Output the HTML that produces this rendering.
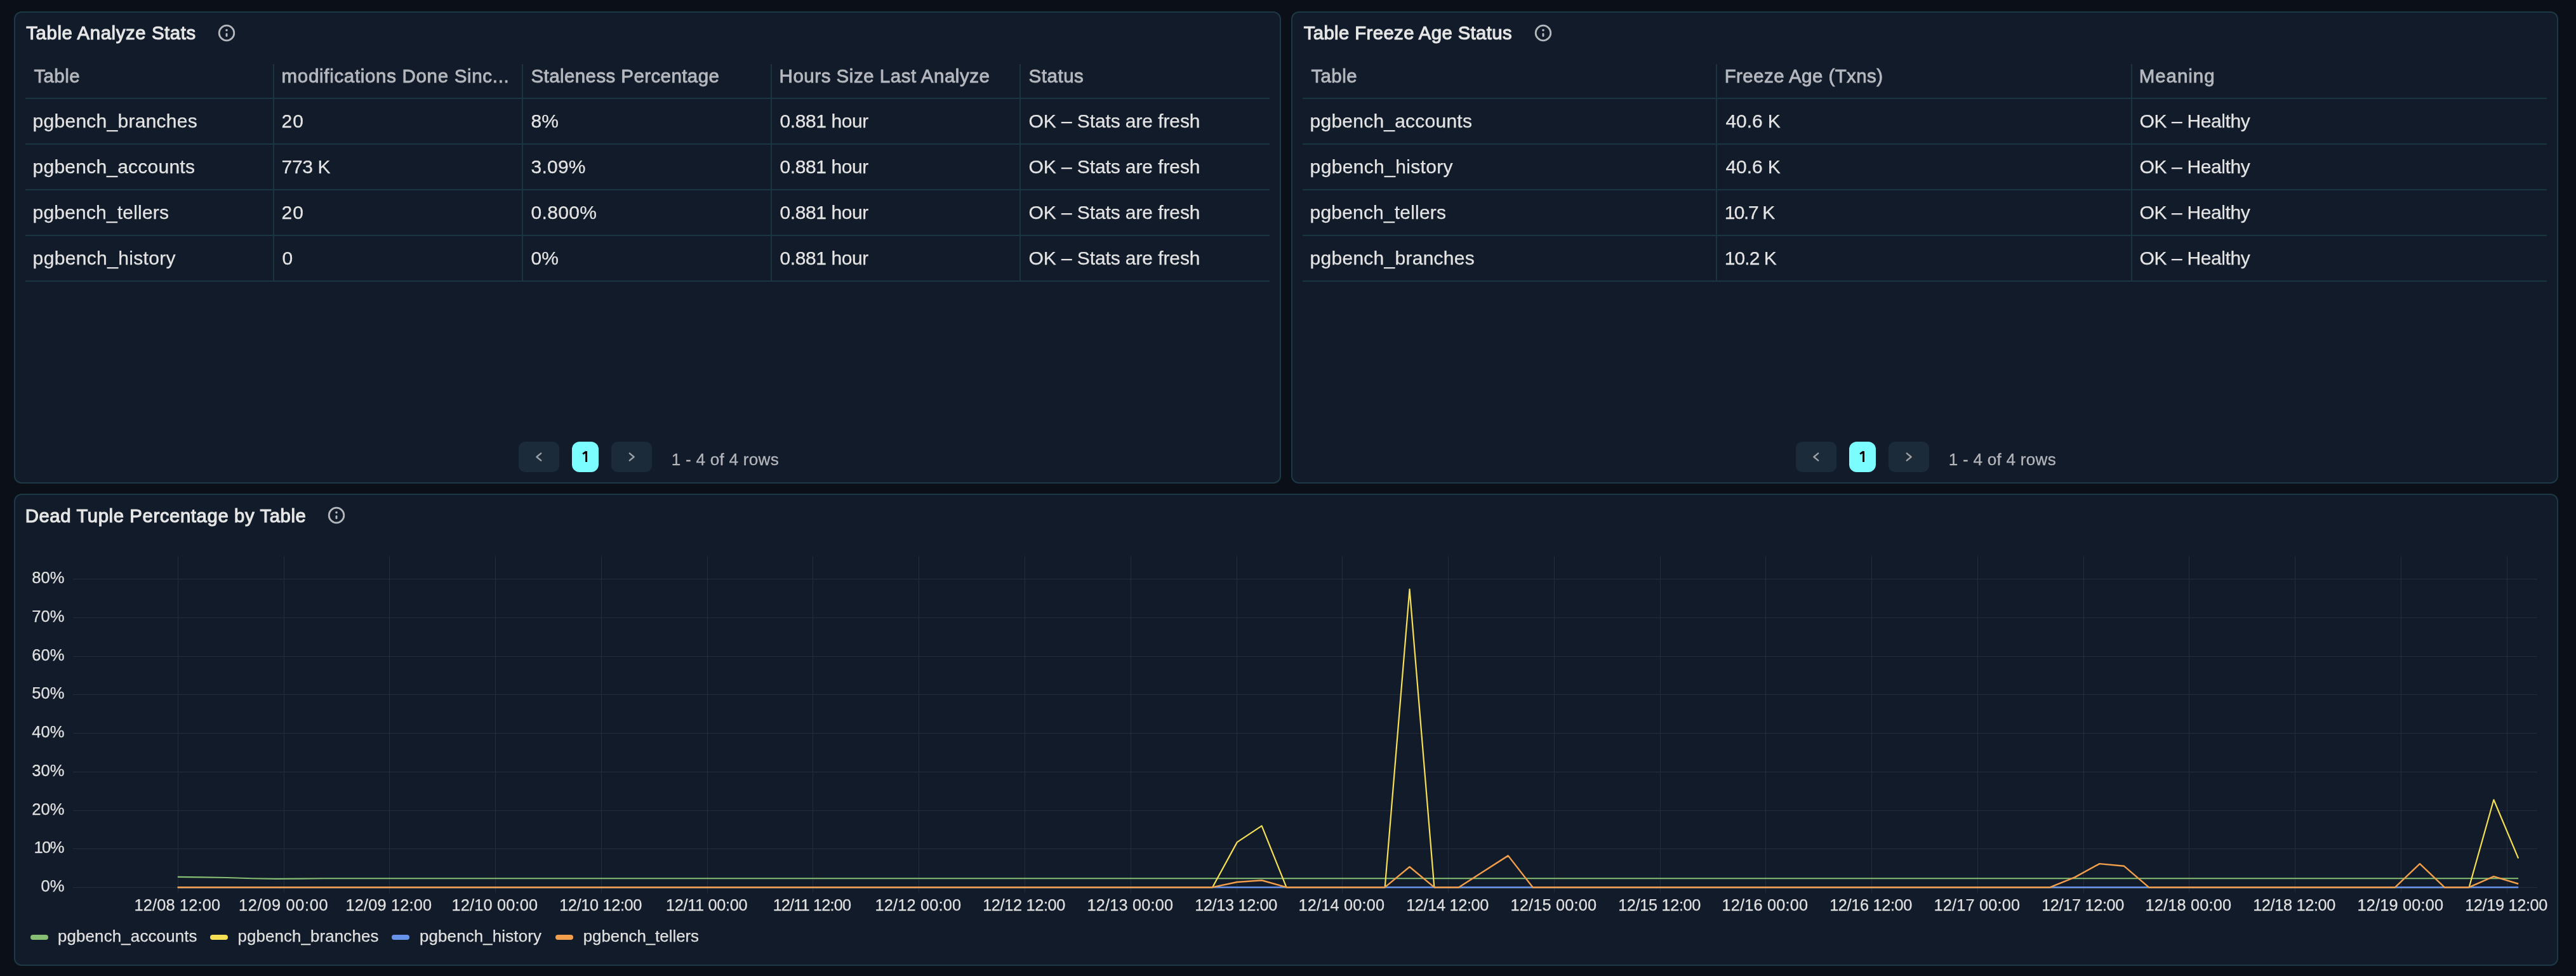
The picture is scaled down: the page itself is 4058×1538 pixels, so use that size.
<!DOCTYPE html>
<html><head><meta charset="utf-8"><style>
html,body{margin:0;padding:0;}
body{width:4058px;height:1538px;background:#0b0f17;position:relative;overflow:hidden;font-family:"Liberation Sans", sans-serif;}
.t{position:absolute;white-space:nowrap;font-family:"Liberation Sans", sans-serif;}
.r{position:absolute;}
#c{position:absolute;left:0;top:0;width:4058px;height:1538px;will-change:transform;}
</style></head><body><div id="c">
<div class="r" style="left:22px;top:18px;width:1992px;height:740px;background:#121b29;border:2px solid #1e3946;border-radius:12px"></div>
<div id="t0" class="t" style="left:41.32px;top:37.20px;font-size:29.3px;line-height:29.3px;color:#e6e6e6;letter-spacing:0.620px;-webkit-text-stroke:1.1px #e6e6e6;">Table Analyze Stats</div>
<svg class="r" style="left:343px;top:38px" width="28" height="28" viewBox="0 0 28 28"><circle cx="14" cy="14" r="11.8" fill="none" stroke="#b4b7bc" stroke-width="2.8"/><circle cx="14" cy="9.6" r="1.8" fill="#b4b7bc"/><line x1="14" y1="15.4" x2="14" y2="18.4" stroke="#b4b7bc" stroke-width="3" stroke-linecap="round"/></svg>
<div class="r" style="left:40px;top:154px;width:1960px;height:2px;background:#1b3442;"></div>
<div class="r" style="left:40px;top:226px;width:1960px;height:2px;background:#1b3442;"></div>
<div class="r" style="left:40px;top:298px;width:1960px;height:2px;background:#1b3442;"></div>
<div class="r" style="left:40px;top:370px;width:1960px;height:2px;background:#1b3442;"></div>
<div class="r" style="left:40px;top:442px;width:1960px;height:2px;background:#1b3442;"></div>
<div class="r" style="left:430.00px;top:101px;width:2px;height:343px;background:#1b3442"></div>
<div class="r" style="left:822.00px;top:101px;width:2px;height:343px;background:#1b3442"></div>
<div class="r" style="left:1214.00px;top:101px;width:2px;height:343px;background:#1b3442"></div>
<div class="r" style="left:1606.00px;top:101px;width:2px;height:343px;background:#1b3442"></div>
<div id="t1" class="t" style="left:53.40px;top:105.13px;font-size:29.5px;line-height:29.5px;color:#b5b8be;letter-spacing:0.405px;-webkit-text-stroke:0.85px #b5b8be;">Table</div>
<div id="t2" class="t" style="left:443.60px;top:105.13px;font-size:29.5px;line-height:29.5px;color:#b5b8be;letter-spacing:0.684px;-webkit-text-stroke:0.85px #b5b8be;">modifications Done Sinc...</div>
<div id="t3" class="t" style="left:836.50px;top:105.13px;font-size:29.5px;line-height:29.5px;color:#b5b8be;letter-spacing:0.407px;-webkit-text-stroke:0.85px #b5b8be;">Staleness Percentage</div>
<div id="t4" class="t" style="left:1227.60px;top:105.13px;font-size:29.5px;line-height:29.5px;color:#b5b8be;letter-spacing:0.524px;-webkit-text-stroke:0.85px #b5b8be;">Hours Size Last Analyze</div>
<div id="t5" class="t" style="left:1620.50px;top:105.13px;font-size:29.5px;line-height:29.5px;color:#b5b8be;letter-spacing:0.540px;-webkit-text-stroke:0.85px #b5b8be;">Status</div>
<div id="t6" class="t" style="left:51.60px;top:175.50px;font-size:30px;line-height:30px;color:#e4e4e4;letter-spacing:0.264px;-webkit-text-stroke:0.25px #e4e4e4;">pgbench_branches</div>
<div id="t7" class="t" style="left:443.60px;top:175.50px;font-size:30px;line-height:30px;color:#e4e4e4;letter-spacing:1.000px;-webkit-text-stroke:0.25px #e4e4e4;">20</div>
<div id="t8" class="t" style="left:836.50px;top:175.50px;font-size:30px;line-height:30px;color:#e4e4e4;-webkit-text-stroke:0.25px #e4e4e4;">8%</div>
<div id="t9" class="t" style="left:1228.50px;top:175.50px;font-size:30px;line-height:30px;color:#e4e4e4;letter-spacing:-0.400px;-webkit-text-stroke:0.25px #e4e4e4;">0.881 hour</div>
<div id="t10" class="t" style="left:1620.50px;top:175.50px;font-size:30px;line-height:30px;color:#e4e4e4;letter-spacing:-0.095px;-webkit-text-stroke:0.25px #e4e4e4;">OK – Stats are fresh</div>
<div id="t11" class="t" style="left:51.60px;top:247.50px;font-size:30px;line-height:30px;color:#e4e4e4;letter-spacing:0.228px;-webkit-text-stroke:0.25px #e4e4e4;">pgbench_accounts</div>
<div id="t12" class="t" style="left:443.60px;top:247.50px;font-size:30px;line-height:30px;color:#e4e4e4;letter-spacing:-0.360px;-webkit-text-stroke:0.25px #e4e4e4;">773 K</div>
<div id="t13" class="t" style="left:836.50px;top:247.50px;font-size:30px;line-height:30px;color:#e4e4e4;letter-spacing:0.225px;-webkit-text-stroke:0.25px #e4e4e4;">3.09%</div>
<div id="t14" class="t" style="left:1228.50px;top:247.50px;font-size:30px;line-height:30px;color:#e4e4e4;letter-spacing:-0.400px;-webkit-text-stroke:0.25px #e4e4e4;">0.881 hour</div>
<div id="t15" class="t" style="left:1620.50px;top:247.50px;font-size:30px;line-height:30px;color:#e4e4e4;letter-spacing:-0.095px;-webkit-text-stroke:0.25px #e4e4e4;">OK – Stats are fresh</div>
<div id="t16" class="t" style="left:51.60px;top:319.50px;font-size:30px;line-height:30px;color:#e4e4e4;letter-spacing:0.180px;-webkit-text-stroke:0.25px #e4e4e4;">pgbench_tellers</div>
<div id="t17" class="t" style="left:443.60px;top:319.50px;font-size:30px;line-height:30px;color:#e4e4e4;letter-spacing:1.000px;-webkit-text-stroke:0.25px #e4e4e4;">20</div>
<div id="t18" class="t" style="left:836.50px;top:319.50px;font-size:30px;line-height:30px;color:#e4e4e4;letter-spacing:0.360px;-webkit-text-stroke:0.25px #e4e4e4;">0.800%</div>
<div id="t19" class="t" style="left:1228.50px;top:319.50px;font-size:30px;line-height:30px;color:#e4e4e4;letter-spacing:-0.400px;-webkit-text-stroke:0.25px #e4e4e4;">0.881 hour</div>
<div id="t20" class="t" style="left:1620.50px;top:319.50px;font-size:30px;line-height:30px;color:#e4e4e4;letter-spacing:-0.095px;-webkit-text-stroke:0.25px #e4e4e4;">OK – Stats are fresh</div>
<div id="t21" class="t" style="left:51.60px;top:391.50px;font-size:30px;line-height:30px;color:#e4e4e4;letter-spacing:0.347px;-webkit-text-stroke:0.25px #e4e4e4;">pgbench_history</div>
<div id="t22" class="t" style="left:444.50px;top:391.50px;font-size:30px;line-height:30px;color:#e4e4e4;-webkit-text-stroke:0.25px #e4e4e4;">0</div>
<div id="t23" class="t" style="left:836.50px;top:391.50px;font-size:30px;line-height:30px;color:#e4e4e4;-webkit-text-stroke:0.25px #e4e4e4;">0%</div>
<div id="t24" class="t" style="left:1228.50px;top:391.50px;font-size:30px;line-height:30px;color:#e4e4e4;letter-spacing:-0.400px;-webkit-text-stroke:0.25px #e4e4e4;">0.881 hour</div>
<div id="t25" class="t" style="left:1620.50px;top:391.50px;font-size:30px;line-height:30px;color:#e4e4e4;letter-spacing:-0.095px;-webkit-text-stroke:0.25px #e4e4e4;">OK – Stats are fresh</div>
<div class="r" style="left:817px;top:696px;width:64px;height:48px;background:#1b2b3a;border-radius:10px"></div>
<div class="r" style="left:901px;top:696px;width:42px;height:48px;background:#7bfcff;border-radius:12px"></div>
<div class="r" style="left:963px;top:696px;width:64px;height:48px;background:#1b2b3a;border-radius:10px"></div>
<svg class="r" style="left:817px;top:696px" width="64" height="48" viewBox="0 0 64 48"><polyline points="35.2,18.3 28.4,24 35.2,29.7" fill="none" stroke="#9da0a5" stroke-width="2.4" stroke-linecap="round" stroke-linejoin="round"/></svg>
<svg class="r" style="left:963px;top:696px" width="64" height="48" viewBox="0 0 64 48"><polyline points="28.8,18.3 35.6,24 28.8,29.7" fill="none" stroke="#9da0a5" stroke-width="2.4" stroke-linecap="round" stroke-linejoin="round"/></svg>
<svg class="r" style="left:901px;top:696px" width="42" height="48" viewBox="0 0 42 48"><path d="M22.6,15 L22.6,32.1 M22.6,15.6 L17.2,19.4" fill="none" stroke="#000" stroke-width="2.9" stroke-linecap="butt" stroke-linejoin="miter"/></svg>
<div id="t26" class="t" style="left:1057.78px;top:710.91px;font-size:26.1px;line-height:26.1px;color:#b4b6bb;letter-spacing:0.257px;-webkit-text-stroke:0.3px #b4b6bb;">1 - 4 of 4 rows</div>
<div class="r" style="left:2034px;top:18px;width:1992px;height:740px;background:#121b29;border:2px solid #1e3946;border-radius:12px"></div>
<div id="t27" class="t" style="left:2053.68px;top:37.20px;font-size:29.3px;line-height:29.3px;color:#e6e6e6;letter-spacing:0.401px;-webkit-text-stroke:1.1px #e6e6e6;">Table Freeze Age Status</div>
<svg class="r" style="left:2416.6px;top:38px" width="28" height="28" viewBox="0 0 28 28"><circle cx="14" cy="14" r="11.8" fill="none" stroke="#b4b7bc" stroke-width="2.8"/><circle cx="14" cy="9.6" r="1.8" fill="#b4b7bc"/><line x1="14" y1="15.4" x2="14" y2="18.4" stroke="#b4b7bc" stroke-width="3" stroke-linecap="round"/></svg>
<div class="r" style="left:2052px;top:154px;width:1960px;height:2px;background:#1b3442;"></div>
<div class="r" style="left:2052px;top:226px;width:1960px;height:2px;background:#1b3442;"></div>
<div class="r" style="left:2052px;top:298px;width:1960px;height:2px;background:#1b3442;"></div>
<div class="r" style="left:2052px;top:370px;width:1960px;height:2px;background:#1b3442;"></div>
<div class="r" style="left:2052px;top:442px;width:1960px;height:2px;background:#1b3442;"></div>
<div class="r" style="left:2703.33px;top:101px;width:2px;height:343px;background:#1b3442"></div>
<div class="r" style="left:3356.67px;top:101px;width:2px;height:343px;background:#1b3442"></div>
<div id="t28" class="t" style="left:2065.40px;top:105.13px;font-size:29.5px;line-height:29.5px;color:#b5b8be;letter-spacing:0.405px;-webkit-text-stroke:0.85px #b5b8be;">Table</div>
<div id="t29" class="t" style="left:2716.63px;top:105.13px;font-size:29.5px;line-height:29.5px;color:#b5b8be;letter-spacing:0.427px;-webkit-text-stroke:0.85px #b5b8be;">Freeze Age (Txns)</div>
<div id="t30" class="t" style="left:3369.67px;top:105.13px;font-size:29.5px;line-height:29.5px;color:#b5b8be;letter-spacing:0.960px;-webkit-text-stroke:0.85px #b5b8be;">Meaning</div>
<div id="t31" class="t" style="left:2063.60px;top:175.50px;font-size:30px;line-height:30px;color:#e4e4e4;letter-spacing:0.228px;-webkit-text-stroke:0.25px #e4e4e4;">pgbench_accounts</div>
<div id="t32" class="t" style="left:2718.43px;top:175.50px;font-size:30px;line-height:30px;color:#e4e4e4;letter-spacing:-0.072px;-webkit-text-stroke:0.25px #e4e4e4;">40.6 K</div>
<div id="t33" class="t" style="left:3370.57px;top:175.50px;font-size:30px;line-height:30px;color:#e4e4e4;letter-spacing:-0.376px;-webkit-text-stroke:0.25px #e4e4e4;">OK – Healthy</div>
<div id="t34" class="t" style="left:2063.60px;top:247.50px;font-size:30px;line-height:30px;color:#e4e4e4;letter-spacing:0.347px;-webkit-text-stroke:0.25px #e4e4e4;">pgbench_history</div>
<div id="t35" class="t" style="left:2718.43px;top:247.50px;font-size:30px;line-height:30px;color:#e4e4e4;letter-spacing:-0.072px;-webkit-text-stroke:0.25px #e4e4e4;">40.6 K</div>
<div id="t36" class="t" style="left:3370.57px;top:247.50px;font-size:30px;line-height:30px;color:#e4e4e4;letter-spacing:-0.376px;-webkit-text-stroke:0.25px #e4e4e4;">OK – Healthy</div>
<div id="t37" class="t" style="left:2063.60px;top:319.50px;font-size:30px;line-height:30px;color:#e4e4e4;letter-spacing:0.180px;-webkit-text-stroke:0.25px #e4e4e4;">pgbench_tellers</div>
<div id="t38" class="t" style="left:2716.63px;top:319.50px;font-size:30px;line-height:30px;color:#e4e4e4;letter-spacing:-1.440px;-webkit-text-stroke:0.25px #e4e4e4;">10.7 K</div>
<div id="t39" class="t" style="left:3370.57px;top:319.50px;font-size:30px;line-height:30px;color:#e4e4e4;letter-spacing:-0.376px;-webkit-text-stroke:0.25px #e4e4e4;">OK – Healthy</div>
<div id="t40" class="t" style="left:2063.60px;top:391.50px;font-size:30px;line-height:30px;color:#e4e4e4;letter-spacing:0.264px;-webkit-text-stroke:0.25px #e4e4e4;">pgbench_branches</div>
<div id="t41" class="t" style="left:2716.63px;top:391.50px;font-size:30px;line-height:30px;color:#e4e4e4;letter-spacing:-0.900px;-webkit-text-stroke:0.25px #e4e4e4;">10.2 K</div>
<div id="t42" class="t" style="left:3370.57px;top:391.50px;font-size:30px;line-height:30px;color:#e4e4e4;letter-spacing:-0.376px;-webkit-text-stroke:0.25px #e4e4e4;">OK – Healthy</div>
<div class="r" style="left:2829px;top:696px;width:64px;height:48px;background:#1b2b3a;border-radius:10px"></div>
<div class="r" style="left:2913px;top:696px;width:42px;height:48px;background:#7bfcff;border-radius:12px"></div>
<div class="r" style="left:2975px;top:696px;width:64px;height:48px;background:#1b2b3a;border-radius:10px"></div>
<svg class="r" style="left:2829px;top:696px" width="64" height="48" viewBox="0 0 64 48"><polyline points="35.2,18.3 28.4,24 35.2,29.7" fill="none" stroke="#9da0a5" stroke-width="2.4" stroke-linecap="round" stroke-linejoin="round"/></svg>
<svg class="r" style="left:2975px;top:696px" width="64" height="48" viewBox="0 0 64 48"><polyline points="28.8,18.3 35.6,24 28.8,29.7" fill="none" stroke="#9da0a5" stroke-width="2.4" stroke-linecap="round" stroke-linejoin="round"/></svg>
<svg class="r" style="left:2913px;top:696px" width="42" height="48" viewBox="0 0 42 48"><path d="M22.6,15 L22.6,32.1 M22.6,15.6 L17.2,19.4" fill="none" stroke="#000" stroke-width="2.9" stroke-linecap="butt" stroke-linejoin="miter"/></svg>
<div id="t43" class="t" style="left:3069.78px;top:710.91px;font-size:26.1px;line-height:26.1px;color:#b4b6bb;letter-spacing:0.257px;-webkit-text-stroke:0.3px #b4b6bb;">1 - 4 of 4 rows</div>
<div class="r" style="left:22px;top:778px;width:4004px;height:740px;background:#121b29;border:2px solid #1e3946;border-radius:12px"></div>
<div id="t44" class="t" style="left:39.70px;top:797.50px;font-size:29.3px;line-height:29.3px;color:#e6e6e6;letter-spacing:0.608px;-webkit-text-stroke:1.1px #e6e6e6;">Dead Tuple Percentage by Table</div>
<svg class="r" style="left:516px;top:798px" width="28" height="28" viewBox="0 0 28 28"><circle cx="14" cy="14" r="11.8" fill="none" stroke="#b4b7bc" stroke-width="2.8"/><circle cx="14" cy="9.6" r="1.8" fill="#b4b7bc"/><line x1="14" y1="15.4" x2="14" y2="18.4" stroke="#b4b7bc" stroke-width="3" stroke-linecap="round"/></svg>
<svg class="r" style="left:0;top:0" width="4058" height="1538" viewBox="0 0 4058 1538"><rect x="115" y="1398" width="3882" height="1" fill="#252d39"/><rect x="115" y="1337" width="3882" height="1" fill="#252d39"/><rect x="115" y="1277" width="3882" height="1" fill="#252d39"/><rect x="115" y="1216" width="3882" height="1" fill="#252d39"/><rect x="115" y="1155" width="3882" height="1" fill="#252d39"/><rect x="115" y="1094" width="3882" height="1" fill="#252d39"/><rect x="115" y="1034" width="3882" height="1" fill="#252d39"/><rect x="115" y="973" width="3882" height="1" fill="#252d39"/><rect x="115" y="912" width="3882" height="1" fill="#252d39"/><rect x="280" y="877" width="1" height="530" fill="#252d39"/><rect x="447" y="877" width="1" height="530" fill="#252d39"/><rect x="613" y="877" width="1" height="530" fill="#252d39"/><rect x="780" y="877" width="1" height="530" fill="#252d39"/><rect x="947" y="877" width="1" height="530" fill="#252d39"/><rect x="1114" y="877" width="1" height="530" fill="#252d39"/><rect x="1280" y="877" width="1" height="530" fill="#252d39"/><rect x="1447" y="877" width="1" height="530" fill="#252d39"/><rect x="1614" y="877" width="1" height="530" fill="#252d39"/><rect x="1781" y="877" width="1" height="530" fill="#252d39"/><rect x="1948" y="877" width="1" height="530" fill="#252d39"/><rect x="2114" y="877" width="1" height="530" fill="#252d39"/><rect x="2281" y="877" width="1" height="530" fill="#252d39"/><rect x="2448" y="877" width="1" height="530" fill="#252d39"/><rect x="2615" y="877" width="1" height="530" fill="#252d39"/><rect x="2781" y="877" width="1" height="530" fill="#252d39"/><rect x="2948" y="877" width="1" height="530" fill="#252d39"/><rect x="3115" y="877" width="1" height="530" fill="#252d39"/><rect x="3282" y="877" width="1" height="530" fill="#252d39"/><rect x="3448" y="877" width="1" height="530" fill="#252d39"/><rect x="3615" y="877" width="1" height="530" fill="#252d39"/><rect x="3782" y="877" width="1" height="530" fill="#252d39"/><rect x="3949" y="877" width="1" height="530" fill="#252d39"/><polyline points="279.80,1381.80 318.61,1382.40 357.43,1383.01 396.24,1384.23 435.06,1384.84 473.87,1384.53 512.69,1384.23 551.50,1384.23 590.32,1384.23 629.13,1384.23 667.95,1384.23 706.76,1384.23 745.58,1384.23 784.39,1384.23 823.21,1384.23 862.02,1384.23 900.84,1384.23 939.65,1384.23 978.47,1384.23 1017.28,1384.23 1056.09,1384.23 1094.91,1384.23 1133.72,1384.23 1172.54,1384.23 1211.35,1384.23 1250.17,1384.23 1288.98,1384.23 1327.80,1384.23 1366.61,1384.23 1405.43,1384.23 1444.24,1384.23 1483.06,1384.23 1521.87,1384.23 1560.69,1384.23 1599.50,1384.23 1638.32,1384.23 1677.13,1384.23 1715.95,1384.23 1754.76,1384.23 1793.57,1384.23 1832.39,1384.23 1871.20,1384.23 1910.02,1384.23 1948.83,1384.23 1987.65,1384.23 2026.46,1384.23 2065.28,1384.23 2104.09,1384.23 2142.91,1384.23 2181.72,1384.23 2220.54,1384.23 2259.35,1384.23 2298.17,1384.23 2336.98,1384.23 2375.80,1384.23 2414.61,1384.23 2453.43,1384.23 2492.24,1384.23 2531.05,1384.23 2569.87,1384.23 2608.68,1384.23 2647.50,1384.23 2686.31,1384.23 2725.13,1384.23 2763.94,1384.23 2802.76,1384.23 2841.57,1384.23 2880.39,1384.23 2919.20,1384.23 2958.02,1384.23 2996.83,1384.23 3035.65,1384.23 3074.46,1384.23 3113.28,1384.23 3152.09,1384.23 3190.91,1384.23 3229.72,1384.23 3268.53,1384.23 3307.35,1384.23 3346.16,1384.23 3384.98,1384.23 3423.79,1384.23 3462.61,1384.23 3501.42,1384.23 3540.24,1384.23 3579.05,1384.23 3617.87,1384.23 3656.68,1384.23 3695.50,1384.23 3734.31,1384.23 3773.13,1384.23 3811.94,1384.23 3850.76,1384.23 3889.57,1384.23 3928.39,1384.23 3967.20,1384.23" fill="none" stroke="#86bf73" stroke-width="2.2" stroke-linejoin="round"/><polyline points="279.80,1398.20 318.61,1398.20 357.43,1398.20 396.24,1398.20 435.06,1398.20 473.87,1398.20 512.69,1398.20 551.50,1398.20 590.32,1398.20 629.13,1398.20 667.95,1398.20 706.76,1398.20 745.58,1398.20 784.39,1398.20 823.21,1398.20 862.02,1398.20 900.84,1398.20 939.65,1398.20 978.47,1398.20 1017.28,1398.20 1056.09,1398.20 1094.91,1398.20 1133.72,1398.20 1172.54,1398.20 1211.35,1398.20 1250.17,1398.20 1288.98,1398.20 1327.80,1398.20 1366.61,1398.20 1405.43,1398.20 1444.24,1398.20 1483.06,1398.20 1521.87,1398.20 1560.69,1398.20 1599.50,1398.20 1638.32,1398.20 1677.13,1398.20 1715.95,1398.20 1754.76,1398.20 1793.57,1398.20 1832.39,1398.20 1871.20,1398.20 1910.02,1398.20 1948.83,1327.12 1987.65,1301.30 2026.46,1398.20 2065.28,1398.20 2104.09,1398.20 2142.91,1398.20 2181.72,1398.20 2220.54,928.60 2259.35,1398.20 2298.17,1398.20 2336.98,1398.20 2375.80,1398.20 2414.61,1398.20 2453.43,1398.20 2492.24,1398.20 2531.05,1398.20 2569.87,1398.20 2608.68,1398.20 2647.50,1398.20 2686.31,1398.20 2725.13,1398.20 2763.94,1398.20 2802.76,1398.20 2841.57,1398.20 2880.39,1398.20 2919.20,1398.20 2958.02,1398.20 2996.83,1398.20 3035.65,1398.20 3074.46,1398.20 3113.28,1398.20 3152.09,1398.20 3190.91,1398.20 3229.72,1398.20 3268.53,1398.20 3307.35,1398.20 3346.16,1398.20 3384.98,1398.20 3423.79,1398.20 3462.61,1398.20 3501.42,1398.20 3540.24,1398.20 3579.05,1398.20 3617.87,1398.20 3656.68,1398.20 3695.50,1398.20 3734.31,1398.20 3773.13,1398.20 3811.94,1398.20 3850.76,1398.20 3889.57,1398.20 3928.39,1260.30 3967.20,1352.64" fill="none" stroke="#f5df55" stroke-width="2.2" stroke-linejoin="round"/><polyline points="279.80,1398.20 318.61,1398.20 357.43,1398.20 396.24,1398.20 435.06,1398.20 473.87,1398.20 512.69,1398.20 551.50,1398.20 590.32,1398.20 629.13,1398.20 667.95,1398.20 706.76,1398.20 745.58,1398.20 784.39,1398.20 823.21,1398.20 862.02,1398.20 900.84,1398.20 939.65,1398.20 978.47,1398.20 1017.28,1398.20 1056.09,1398.20 1094.91,1398.20 1133.72,1398.20 1172.54,1398.20 1211.35,1398.20 1250.17,1398.20 1288.98,1398.20 1327.80,1398.20 1366.61,1398.20 1405.43,1398.20 1444.24,1398.20 1483.06,1398.20 1521.87,1398.20 1560.69,1398.20 1599.50,1398.20 1638.32,1398.20 1677.13,1398.20 1715.95,1398.20 1754.76,1398.20 1793.57,1398.20 1832.39,1398.20 1871.20,1398.20 1910.02,1398.20 1948.83,1398.20 1987.65,1398.20 2026.46,1398.20 2065.28,1398.20 2104.09,1398.20 2142.91,1398.20 2181.72,1398.20 2220.54,1398.20 2259.35,1398.20 2298.17,1398.20 2336.98,1398.20 2375.80,1398.20 2414.61,1398.20 2453.43,1398.20 2492.24,1398.20 2531.05,1398.20 2569.87,1398.20 2608.68,1398.20 2647.50,1398.20 2686.31,1398.20 2725.13,1398.20 2763.94,1398.20 2802.76,1398.20 2841.57,1398.20 2880.39,1398.20 2919.20,1398.20 2958.02,1398.20 2996.83,1398.20 3035.65,1398.20 3074.46,1398.20 3113.28,1398.20 3152.09,1398.20 3190.91,1398.20 3229.72,1398.20 3268.53,1398.20 3307.35,1398.20 3346.16,1398.20 3384.98,1398.20 3423.79,1398.20 3462.61,1398.20 3501.42,1398.20 3540.24,1398.20 3579.05,1398.20 3617.87,1398.20 3656.68,1398.20 3695.50,1398.20 3734.31,1398.20 3773.13,1398.20 3811.94,1398.20 3850.76,1398.20 3889.57,1398.20 3928.39,1398.20 3967.20,1398.20" fill="none" stroke="#6794ea" stroke-width="2.4" stroke-linejoin="round"/><polyline points="279.80,1398.20 318.61,1398.20 357.43,1398.20 396.24,1398.20 435.06,1398.20 473.87,1398.20 512.69,1398.20 551.50,1398.20 590.32,1398.20 629.13,1398.20 667.95,1398.20 706.76,1398.20 745.58,1398.20 784.39,1398.20 823.21,1398.20 862.02,1398.20 900.84,1398.20 939.65,1398.20 978.47,1398.20 1017.28,1398.20 1056.09,1398.20 1094.91,1398.20 1133.72,1398.20 1172.54,1398.20 1211.35,1398.20 1250.17,1398.20 1288.98,1398.20 1327.80,1398.20 1366.61,1398.20 1405.43,1398.20 1444.24,1398.20 1483.06,1398.20 1521.87,1398.20 1560.69,1398.20 1599.50,1398.20 1638.32,1398.20 1677.13,1398.20 1715.95,1398.20 1754.76,1398.20 1793.57,1398.20 1832.39,1398.20 1871.20,1398.20 1910.02,1398.20 1948.83,1390.00 1987.65,1387.27 2026.46,1398.20 2065.28,1398.20 2104.09,1398.20 2142.91,1398.20 2181.72,1398.20 2220.54,1366.00 2259.35,1398.20 2298.17,1398.20 2336.98,1373.29 2375.80,1348.38 2414.61,1398.20 2453.43,1398.20 2492.24,1398.20 2531.05,1398.20 2569.87,1398.20 2608.68,1398.20 2647.50,1398.20 2686.31,1398.20 2725.13,1398.20 2763.94,1398.20 2802.76,1398.20 2841.57,1398.20 2880.39,1398.20 2919.20,1398.20 2958.02,1398.20 2996.83,1398.20 3035.65,1398.20 3074.46,1398.20 3113.28,1398.20 3152.09,1398.20 3190.91,1398.20 3229.72,1398.20 3268.53,1382.40 3307.35,1361.14 3346.16,1364.79 3384.98,1398.20 3423.79,1398.20 3462.61,1398.20 3501.42,1398.20 3540.24,1398.20 3579.05,1398.20 3617.87,1398.20 3656.68,1398.20 3695.50,1398.20 3734.31,1398.20 3773.13,1398.20 3811.94,1361.14 3850.76,1398.20 3889.57,1398.20 3928.39,1381.19 3967.20,1392.73" fill="none" stroke="#f29e4a" stroke-width="2.4" stroke-linejoin="round"/></svg>
<div id="t45" class="t" style="right:3956.50px;top:1384.33px;font-size:25.6px;line-height:25.6px;color:#e0e0e0;text-align:right;-webkit-text-stroke:0.25px #e0e0e0;">0%</div>
<div id="t46" class="t" style="right:3958.10px;top:1323.33px;font-size:25.6px;line-height:25.6px;color:#e0e0e0;text-align:right;letter-spacing:-1.600px;-webkit-text-stroke:0.25px #e0e0e0;">10%</div>
<div id="t47" class="t" style="right:3956.50px;top:1263.33px;font-size:25.6px;line-height:25.6px;color:#e0e0e0;text-align:right;-webkit-text-stroke:0.25px #e0e0e0;">20%</div>
<div id="t48" class="t" style="right:3956.50px;top:1202.33px;font-size:25.6px;line-height:25.6px;color:#e0e0e0;text-align:right;-webkit-text-stroke:0.25px #e0e0e0;">30%</div>
<div id="t49" class="t" style="right:3956.50px;top:1141.33px;font-size:25.6px;line-height:25.6px;color:#e0e0e0;text-align:right;-webkit-text-stroke:0.25px #e0e0e0;">40%</div>
<div id="t50" class="t" style="right:3956.50px;top:1080.33px;font-size:25.6px;line-height:25.6px;color:#e0e0e0;text-align:right;-webkit-text-stroke:0.25px #e0e0e0;">50%</div>
<div id="t51" class="t" style="right:3956.50px;top:1020.33px;font-size:25.6px;line-height:25.6px;color:#e0e0e0;text-align:right;-webkit-text-stroke:0.25px #e0e0e0;">60%</div>
<div id="t52" class="t" style="right:3956.50px;top:959.33px;font-size:25.6px;line-height:25.6px;color:#e0e0e0;text-align:right;-webkit-text-stroke:0.25px #e0e0e0;">70%</div>
<div id="t53" class="t" style="right:3956.50px;top:898.33px;font-size:25.6px;line-height:25.6px;color:#e0e0e0;text-align:right;-webkit-text-stroke:0.25px #e0e0e0;">80%</div>
<div id="t54" class="t" style="left:79.39px;width:400px;top:1413.68px;font-size:25.3px;line-height:25.3px;color:#e0e0e0;text-align:center;letter-spacing:0.173px;-webkit-text-stroke:0.25px #e0e0e0;">12/08 12:00</div>
<div id="t55" class="t" style="left:246.64px;width:400px;top:1413.68px;font-size:25.3px;line-height:25.3px;color:#e0e0e0;text-align:center;letter-spacing:0.682px;-webkit-text-stroke:0.25px #e0e0e0;">12/09 00:00</div>
<div id="t56" class="t" style="left:412.39px;width:400px;top:1413.68px;font-size:25.3px;line-height:25.3px;color:#e0e0e0;text-align:center;letter-spacing:0.173px;-webkit-text-stroke:0.25px #e0e0e0;">12/09 12:00</div>
<div id="t57" class="t" style="left:579.39px;width:400px;top:1413.68px;font-size:25.3px;line-height:25.3px;color:#e0e0e0;text-align:center;letter-spacing:0.173px;-webkit-text-stroke:0.25px #e0e0e0;">12/10 00:00</div>
<div id="t58" class="t" style="left:746.13px;width:400px;top:1413.68px;font-size:25.3px;line-height:25.3px;color:#e0e0e0;text-align:center;letter-spacing:-0.336px;-webkit-text-stroke:0.25px #e0e0e0;">12/10 12:00</div>
<div id="t59" class="t" style="left:913.13px;width:400px;top:1413.68px;font-size:25.3px;line-height:25.3px;color:#e0e0e0;text-align:center;letter-spacing:-0.336px;-webkit-text-stroke:0.25px #e0e0e0;">12/11 00:00</div>
<div id="t60" class="t" style="left:1078.88px;width:400px;top:1413.68px;font-size:25.3px;line-height:25.3px;color:#e0e0e0;text-align:center;letter-spacing:-0.845px;-webkit-text-stroke:0.25px #e0e0e0;">12/11 12:00</div>
<div id="t61" class="t" style="left:1246.39px;width:400px;top:1413.68px;font-size:25.3px;line-height:25.3px;color:#e0e0e0;text-align:center;letter-spacing:0.173px;-webkit-text-stroke:0.25px #e0e0e0;">12/12 00:00</div>
<div id="t62" class="t" style="left:1413.13px;width:400px;top:1413.68px;font-size:25.3px;line-height:25.3px;color:#e0e0e0;text-align:center;letter-spacing:-0.336px;-webkit-text-stroke:0.25px #e0e0e0;">12/12 12:00</div>
<div id="t63" class="t" style="left:1580.39px;width:400px;top:1413.68px;font-size:25.3px;line-height:25.3px;color:#e0e0e0;text-align:center;letter-spacing:0.173px;-webkit-text-stroke:0.25px #e0e0e0;">12/13 00:00</div>
<div id="t64" class="t" style="left:1747.13px;width:400px;top:1413.68px;font-size:25.3px;line-height:25.3px;color:#e0e0e0;text-align:center;letter-spacing:-0.336px;-webkit-text-stroke:0.25px #e0e0e0;">12/13 12:00</div>
<div id="t65" class="t" style="left:1913.39px;width:400px;top:1413.68px;font-size:25.3px;line-height:25.3px;color:#e0e0e0;text-align:center;letter-spacing:0.173px;-webkit-text-stroke:0.25px #e0e0e0;">12/14 00:00</div>
<div id="t66" class="t" style="left:2080.13px;width:400px;top:1413.68px;font-size:25.3px;line-height:25.3px;color:#e0e0e0;text-align:center;letter-spacing:-0.336px;-webkit-text-stroke:0.25px #e0e0e0;">12/14 12:00</div>
<div id="t67" class="t" style="left:2247.39px;width:400px;top:1413.68px;font-size:25.3px;line-height:25.3px;color:#e0e0e0;text-align:center;letter-spacing:0.173px;-webkit-text-stroke:0.25px #e0e0e0;">12/15 00:00</div>
<div id="t68" class="t" style="left:2414.13px;width:400px;top:1413.68px;font-size:25.3px;line-height:25.3px;color:#e0e0e0;text-align:center;letter-spacing:-0.336px;-webkit-text-stroke:0.25px #e0e0e0;">12/15 12:00</div>
<div id="t69" class="t" style="left:2580.39px;width:400px;top:1413.68px;font-size:25.3px;line-height:25.3px;color:#e0e0e0;text-align:center;letter-spacing:0.173px;-webkit-text-stroke:0.25px #e0e0e0;">12/16 00:00</div>
<div id="t70" class="t" style="left:2747.13px;width:400px;top:1413.68px;font-size:25.3px;line-height:25.3px;color:#e0e0e0;text-align:center;letter-spacing:-0.336px;-webkit-text-stroke:0.25px #e0e0e0;">12/16 12:00</div>
<div id="t71" class="t" style="left:2914.39px;width:400px;top:1413.68px;font-size:25.3px;line-height:25.3px;color:#e0e0e0;text-align:center;letter-spacing:0.173px;-webkit-text-stroke:0.25px #e0e0e0;">12/17 00:00</div>
<div id="t72" class="t" style="left:3081.13px;width:400px;top:1413.68px;font-size:25.3px;line-height:25.3px;color:#e0e0e0;text-align:center;letter-spacing:-0.336px;-webkit-text-stroke:0.25px #e0e0e0;">12/17 12:00</div>
<div id="t73" class="t" style="left:3247.39px;width:400px;top:1413.68px;font-size:25.3px;line-height:25.3px;color:#e0e0e0;text-align:center;letter-spacing:0.173px;-webkit-text-stroke:0.25px #e0e0e0;">12/18 00:00</div>
<div id="t74" class="t" style="left:3414.13px;width:400px;top:1413.68px;font-size:25.3px;line-height:25.3px;color:#e0e0e0;text-align:center;letter-spacing:-0.336px;-webkit-text-stroke:0.25px #e0e0e0;">12/18 12:00</div>
<div id="t75" class="t" style="left:3581.39px;width:400px;top:1413.68px;font-size:25.3px;line-height:25.3px;color:#e0e0e0;text-align:center;letter-spacing:0.173px;-webkit-text-stroke:0.25px #e0e0e0;">12/19 00:00</div>
<div id="t76" class="t" style="left:3748.13px;width:400px;top:1413.68px;font-size:25.3px;line-height:25.3px;color:#e0e0e0;text-align:center;letter-spacing:-0.336px;-webkit-text-stroke:0.25px #e0e0e0;">12/19 12:00</div>
<div class="r" style="left:48px;top:1473px;width:28px;height:8px;background:#86bf73;border-radius:4px"></div>
<div id="t77" class="t" style="left:90.88px;top:1462.96px;font-size:25.8px;line-height:25.8px;color:#e0e0e0;letter-spacing:0.204px;-webkit-text-stroke:0.25px #e0e0e0;">pgbench_accounts</div>
<div class="r" style="left:331.2px;top:1473px;width:28px;height:8px;background:#f5df55;border-radius:4px"></div>
<div id="t78" class="t" style="left:374.38px;top:1462.96px;font-size:25.8px;line-height:25.8px;color:#e0e0e0;letter-spacing:0.168px;-webkit-text-stroke:0.25px #e0e0e0;">pgbench_branches</div>
<div class="r" style="left:617px;top:1473px;width:28px;height:8px;background:#6794ea;border-radius:4px"></div>
<div id="t79" class="t" style="left:661.04px;top:1462.96px;font-size:25.8px;line-height:25.8px;color:#e0e0e0;letter-spacing:0.180px;-webkit-text-stroke:0.25px #e0e0e0;">pgbench_history</div>
<div class="r" style="left:875px;top:1473px;width:28px;height:8px;background:#f29e4a;border-radius:4px"></div>
<div id="t80" class="t" style="left:918.70px;top:1462.96px;font-size:25.8px;line-height:25.8px;color:#e0e0e0;letter-spacing:0.013px;-webkit-text-stroke:0.25px #e0e0e0;">pgbench_tellers</div>
</div></body></html>
